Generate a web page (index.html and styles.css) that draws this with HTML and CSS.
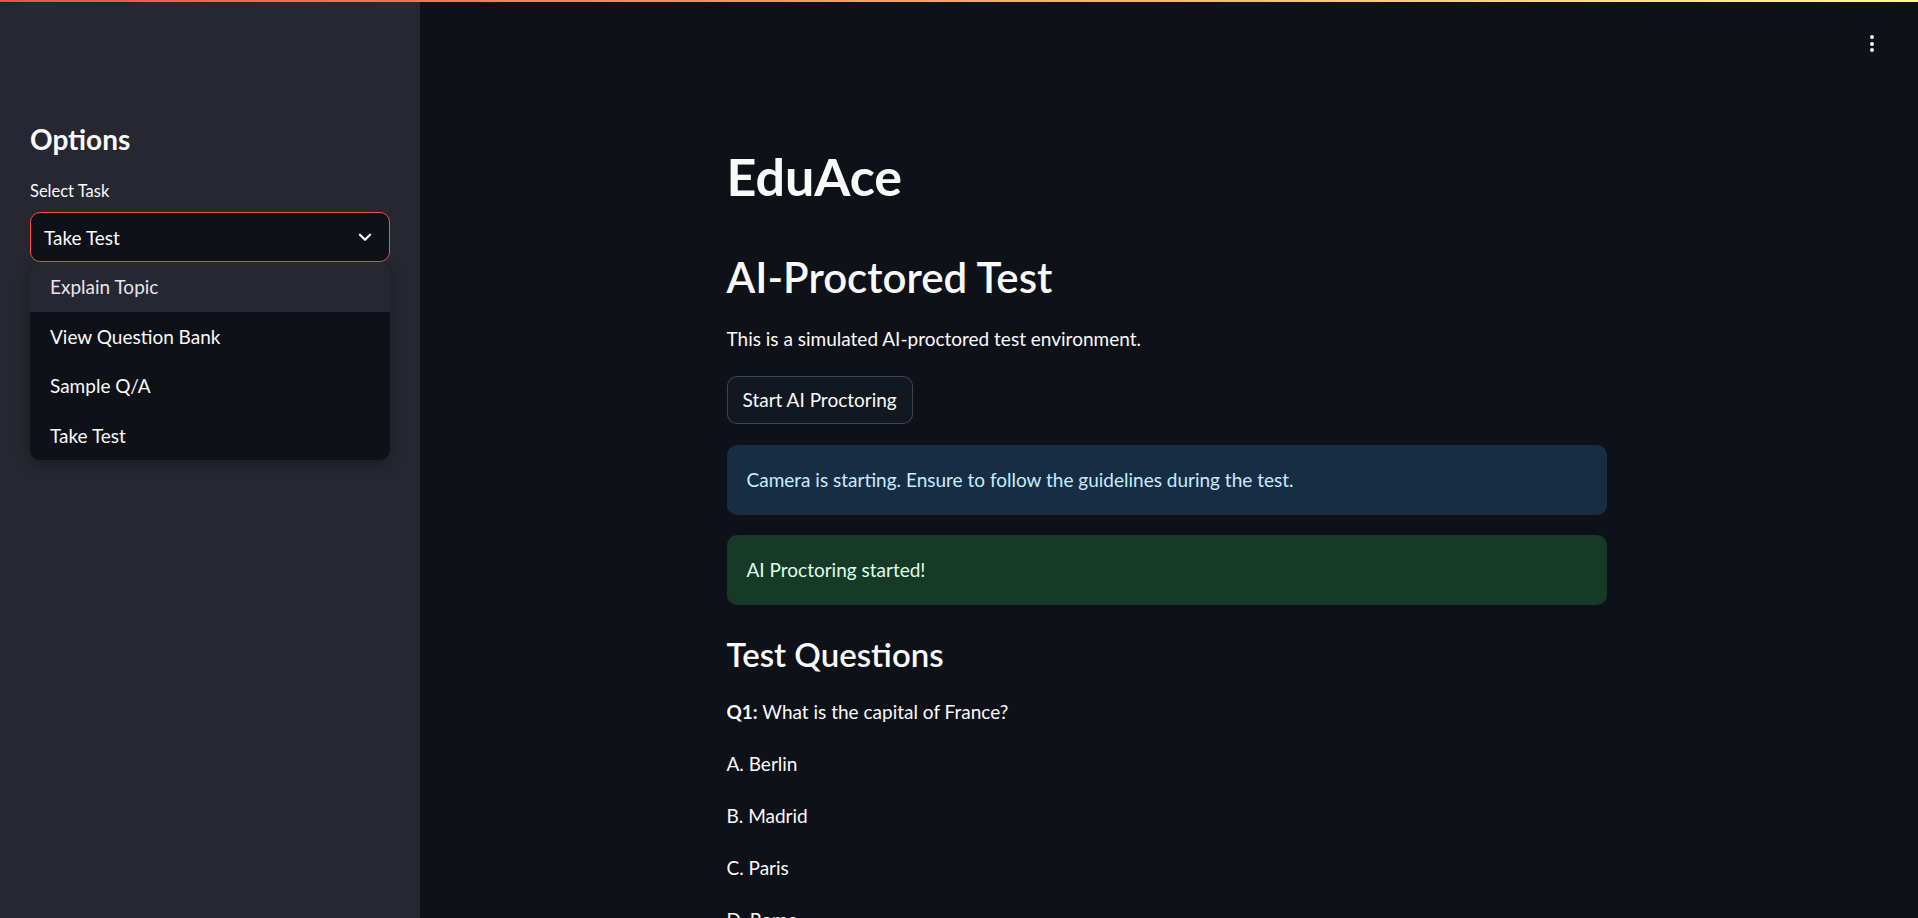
FILE: index.html
```html
<!DOCTYPE html>
<html lang="en">
<head>
<meta charset="utf-8">
<title>EduAce</title>
<link rel="stylesheet" href="styles.css">
</head>
<body>
<div class="decoration"></div>
<div class="app">
  <aside class="sidebar">
    <h2 class="side-title">Options</h2>
    <label class="side-label">Select Task</label>
    <div class="select-wrap">
      <div class="select">
        <span class="select-value">Take Test</span>
        <svg class="chevron" width="18" height="18" viewBox="0 0 16 16" aria-hidden="true"><path d="M3.5 6 L8 10.5 L12.5 6" fill="none" stroke="#fafafa" stroke-width="2" stroke-linecap="round" stroke-linejoin="round"/></svg>
      </div>
      <ul class="menu">
        <li class="menu-item active">Explain Topic</li>
        <li class="menu-item">View Question Bank</li>
        <li class="menu-item">Sample Q/A</li>
        <li class="menu-item">Take Test</li>
      </ul>
    </div>
  </aside>
  <main class="main">
    <header class="header">
      <div class="kebab"><span></span><span></span><span></span></div>
    </header>
    <div class="block">
      <h1 class="title">EduAce</h1>
      <h2 class="subtitle">AI-Proctored Test</h2>
      <p class="text">This is a simulated AI-proctored test environment.</p>
      <div><button class="btn">Start AI Proctoring</button></div>
      <div class="alert info">Camera is starting. Ensure to follow the guidelines during the test.</div>
      <div class="alert success">AI Proctoring started!</div>
      <h3 class="section">Test Questions</h3>
      <p class="text q"><strong>Q1:</strong> What is the capital of France?</p>
      <p class="text">A. Berlin</p>
      <p class="text">B. Madrid</p>
      <p class="text">C. Paris</p>
      <p class="text">D. Rome</p>
    </div>
  </main>
</div>
</body>
</html>
```
FILE: styles.css
```css
* { box-sizing: border-box; }
html, body {
  margin: 0;
  padding: 0;
  height: 100%;
  overflow: hidden;
  background: #0e1117;
  color: #fafafa;
  font-family: "Lato", "Noto Sans", sans-serif;
}
.decoration {
  position: absolute;
  top: 0;
  left: 0;
  right: 0;
  height: 2px;
  background: linear-gradient(90deg, #ff4b4b, #fffd80);
  z-index: 10;
}
.app {
  display: flex;
  height: 918px;
}
.sidebar {
  width: 420px;
  flex: none;
  background: #262730;
  padding: 121px 30px 30px;
  display: flex;
  flex-direction: column;
}
.side-title {
  margin: 0;
  font-size: 28px;
  line-height: 36px;
  font-weight: 700;
}
.side-label {
  margin-top: 23px;
  font-size: 16.5px;
  line-height: 22px;
}
.select-wrap {
  position: relative;
  margin-top: 10px;
}
.select {
  height: 50px;
  border: 1px solid #ff4b4b;
  border-radius: 10px;
  background: #0e1117;
  display: flex;
  align-items: center;
  justify-content: space-between;
  padding: 0 15px 0 13px;
  font-size: 19px;
}
.chevron { display: block; }
.menu {
  position: absolute;
  top: 100%;
  left: 0;
  right: 0;
  margin: 0;
  padding: 0;
  list-style: none;
  background: #0e1117;
  border-radius: 10px;
  overflow: hidden;
  box-shadow: 0 4px 16px rgba(0, 0, 0, 0.3);
}
.menu-item {
  height: 49.5px;
  display: flex;
  align-items: center;
  padding-left: 20px;
  font-size: 19px;
  color: #fafafa;
}
.menu-item.active {
  background: #262730;
  color: #e6e6e8;
}
.main {
  flex: 1;
  position: relative;
  overflow: hidden;
  padding-right: 5px;
}
.header {
  position: absolute;
  top: 0;
  right: 0;
  height: 75px;
  padding: 35px 44px 0 0;
}
.kebab {
  display: flex;
  flex-direction: column;
  gap: 2.5px;
  align-items: center;
}
.kebab span {
  width: 4px;
  height: 4px;
  border-radius: 50%;
  background: #fafafa;
}
.block {
  max-width: 920px;
  margin: 0 auto;
  padding: 143px 20px 0;
  display: flex;
  flex-direction: column;
  gap: 20px;
}
.title {
  margin: 0;
  font-size: 52px;
  line-height: 66px;
  font-weight: 700;
}
.subtitle {
  margin: 21px 0 -1px;
  font-size: 42px;
  line-height: 54px;
  font-weight: 600;
}
.text {
  margin: 0;
  font-size: 19px;
  line-height: 32px;
}
.text strong { font-weight: 700; }
.btn {
  font-family: inherit;
  font-size: 19px;
  line-height: 32px;
  color: #fafafa;
  background: #13171f;
  border: 1px solid rgba(250, 250, 250, 0.2);
  border-radius: 10px;
  padding: 7px 15px;
  margin-top: 1px;
}
.alert {
  padding: 19px 20px;
  border-radius: 10px;
  font-size: 19px;
  line-height: 32px;
}
.info {
  margin-top: 1px;
  background: #172d43;
  color: #c7ebff;
}
.success {
  background: #173928;
  color: #dffde9;
}
.section {
  margin: 8px 0 1px;
  font-size: 33px;
  line-height: 42px;
  font-weight: 600;
}
```
